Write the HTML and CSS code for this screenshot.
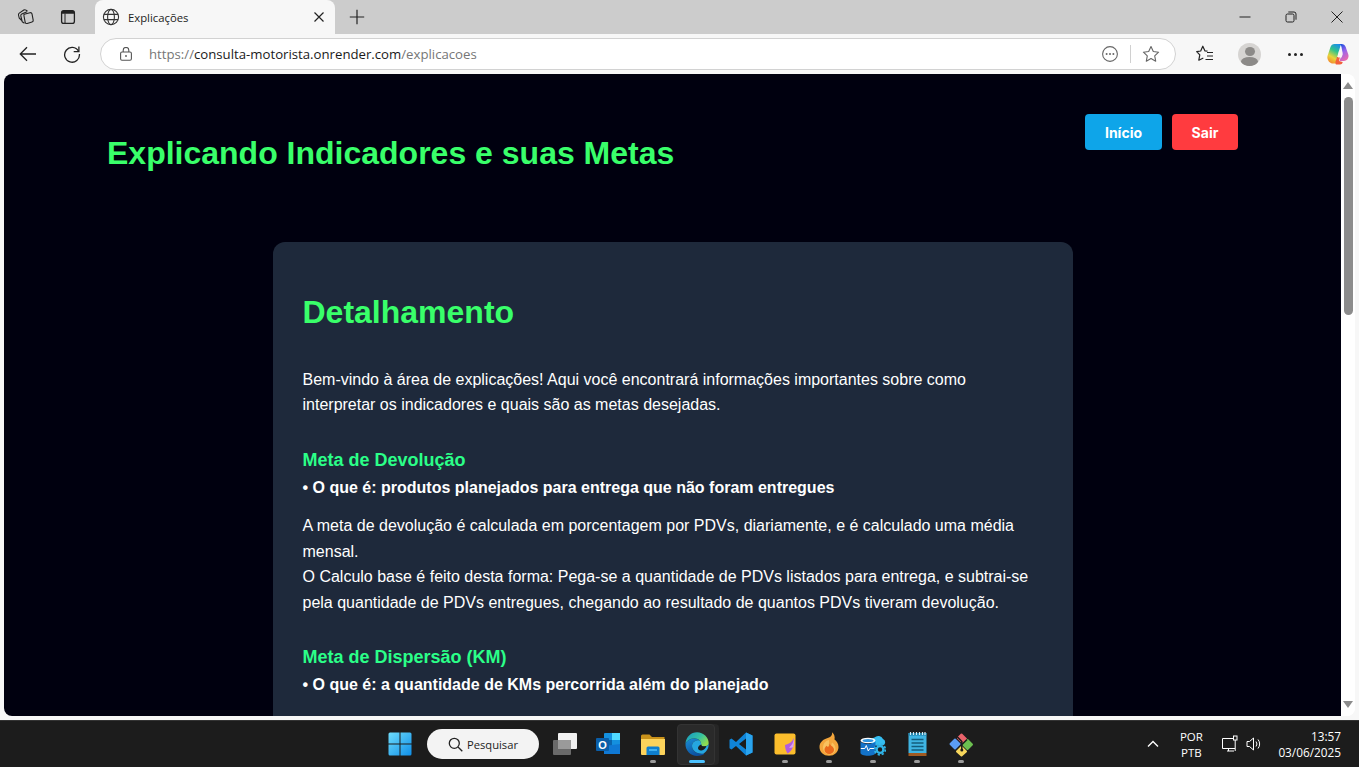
FILE: index.html
```html
<!DOCTYPE html>
<html lang="pt-BR">
<head>
  <meta charset="UTF-8" />
  <title>Explicações</title>
  <link rel="stylesheet" href="styles.css">
</head>
<body>
  <div class="window">

    <!-- Abas -->
    <div class="tabstrip">
      <div class="strip-left">
        <svg class="ico" width="18" height="18" viewBox="0 0 18 18" fill="none" stroke="#222" stroke-width="1.100" stroke-linejoin="round"><path d="M7.200 6.300 13 4.700q1.600-.3 2 1.200l1.200 6.300q.2 1.500-1.200 1.800l-4.800 1.500q-1.600.3-2-1.200L7 8q-.3-1.300.2-1.700z"/><path d="M7.500 15.200 5.200 13.700 3.800 7.800q-.2-1.300 1-1.800L10 3.700"/><path d="M4.800 12.500 2.200 10 1.500 7q-.2-1.200.8-1.900L6.800 2q1.100-.6 2.200.1L10.500 3.300"/></svg>
        <svg class="ico" width="18" height="18" viewBox="0 0 18 18"><rect x="2.600" y="2.600" width="12.800" height="12.800" rx="2.200" fill="none" stroke="#222" stroke-width="1.300"/><path d="M2.600 5.800h12.800v-1a2.200 2.200 0 0 0-2.200-2.200H4.800a2.200 2.200 0 0 0-2.200 2.200z" fill="#222"/><path d="M6 5.500v9.900" stroke="#222" stroke-width="1"/></svg>
      </div>
      <div class="tab">
        <svg width="18" height="18" viewBox="0 0 18 18" fill="none" stroke="#333" stroke-width="1.100"><circle cx="9" cy="9" r="7.600"/><ellipse cx="9" cy="9" rx="3.400" ry="7.600"/><path d="M2 6.400h14M2 11.600h14"/></svg>
        <span class="tab-title">Explicações</span>
        <svg class="tab-close" width="12" height="12" viewBox="0 0 12 12"><path d="M1.500 1.500l9 9M10.500 1.500l-9 9" stroke="#222" stroke-width="1.200"/></svg>
      </div>
      <svg class="new-tab" width="16" height="16" viewBox="0 0 16 16"><path d="M8 .8v14.400M.8 8h14.400" stroke="#222" stroke-width="1.200"/></svg>
      <div class="win-controls">
        <svg width="12" height="12" viewBox="0 0 12 12"><path d="M.5 6h11" stroke="#222" stroke-width="1"/></svg>
        <svg width="12" height="12" viewBox="0 0 12 12" fill="none" stroke="#222" stroke-width="1"><rect x="1" y="3" width="8" height="8" rx="1.500"/><path d="M3.300 1h5.700a2 2 0 0 1 2 2v5.700"/></svg>
        <svg width="12" height="12" viewBox="0 0 12 12"><path d="M.5.500l11 11M11.500.500l-11 11" stroke="#222" stroke-width="1"/></svg>
      </div>
    </div>

    <!-- Barra de endereço -->
    <div class="toolbar">
      <svg class="tool-back" width="18" height="18" viewBox="0 0 18 18" fill="none" stroke="#222" stroke-width="1.300"><path d="M17 9H1.500M8 2.200 1.300 9 8 15.800"/></svg>
      <svg class="tool-reload" width="18" height="18" viewBox="0 0 18 18" fill="none" stroke="#222" stroke-width="1.300"><path d="M15.500 6.200A7.400 7.400 0 1 0 16.400 9"/><path d="M15.900 1.400v5.200h-5.200"/></svg>
      <div class="omnibox">
        <svg width="14" height="14" viewBox="0 0 14 14" fill="none" stroke="#555" stroke-width="1.100"><rect x="1.600" y="5" width="10.800" height="8.200" rx="1.400"/><path d="M4.200 5V3.200a2.800 2.800 0 0 1 5.600 0V5"/><circle cx="7" cy="9" r=".9" fill="#555" stroke="none"/></svg>
        <span class="url"><span class="url-dim">https://</span>consulta-motorista.onrender.com<span class="url-dim">/explicacoes</span></span>
        <svg class="omni-dots" width="18" height="18" viewBox="0 0 18 18"><circle cx="9" cy="9" r="7.400" fill="none" stroke="#666" stroke-width="1.100"/><circle cx="5.600" cy="9" r="1" fill="#666"/><circle cx="9" cy="9" r="1" fill="#666"/><circle cx="12.400" cy="9" r="1" fill="#666"/></svg>
        <span class="omni-sep"></span>
        <svg width="18" height="18" viewBox="0 0 18 18"><path d="M9 1.600l2.300 4.900 5.300.7-3.900 3.700 1 5.300L9 13.600l-4.700 2.600 1-5.300-3.900-3.700 5.300-.7z" fill="none" stroke="#666" stroke-width="1.100" stroke-linejoin="round"/></svg>
      </div>
      <svg class="tool-favs" width="18" height="18" viewBox="0 0 18 18" fill="none" stroke="#222" stroke-width="1.200" stroke-linejoin="round"><path d="M11.500 6.200 9 6 6.800 1.200 4.700 6 .7 6.600l3.100 3.300-1 5.300L7.300 13"/><path d="M11 7.500h6M11 11h6M9.500 14.500h7.500"/></svg>
      <div class="avatar"><span class="avatar-head"></span><span class="avatar-body"></span></div>
      <div class="tool-more"><span></span><span></span><span></span></div>
      <svg class="copilot" width="22" height="22" viewBox="0 0 22 22">
        <defs>
          <linearGradient id="cpa" x1=".7" y1="0" x2=".3" y2="1"><stop offset="0" stop-color="#1c8fe6"/><stop offset=".35" stop-color="#2fc48a"/><stop offset=".7" stop-color="#e8d53a"/><stop offset="1" stop-color="#f48a2c"/></linearGradient>
          <linearGradient id="cpb" x1=".3" y1="0" x2=".7" y2="1"><stop offset="0" stop-color="#1f4fe0"/><stop offset=".45" stop-color="#9b63ea"/><stop offset="1" stop-color="#f06aa8"/></linearGradient>
        </defs>
        <path d="M7.500 1h6.500L10 14.500 8.800 20.500H6c-3 0-5-2.500-5.500-5 -.3-1.500 0-2.500.5-4l2.500-7.500C4.200 2 5.500 1 7.500 1z" fill="url(#cpa)"/>
        <path d="M12 1h2.500c2 0 3.500 1 4.200 3l2.600 7.500c.9 3-1 6.500-4.300 6.500H12.500l3-8.500L14.500 4C14 2 13 1.300 12 1z" fill="url(#cpb)"/>
        <path d="M9 21.500h4c1.500 0 2.200-.7 2.700-2.200l-.2-.3L12 18l1-4H10l-1.500 4.500c-.3 1.500 0 2.500.5 3z" fill="#f2603c"/>
        <path d="M11.800 8.500h3l1 2.500-1.200 3.500h-3.600z" fill="#fbf4f4"/>
      </svg>
    </div>

    <!-- Área da página -->
    <div class="viewport">
      <div class="page">
        <header class="page-header">
          <h1>Explicando Indicadores e suas Metas</h1>
          <nav class="page-nav">
            <a class="btn btn-home" href="#">Início</a>
            <a class="btn btn-exit" href="#">Sair</a>
          </nav>
        </header>

        <section class="card">
          <h2>Detalhamento</h2>
          <p class="intro">Bem-vindo à área de explicações! Aqui você encontrará informações importantes sobre como interpretar os indicadores e quais são as metas desejadas.</p>

          <h3>Meta de Devolução</h3>
          <p class="what">• O que é: produtos planejados para entrega que não foram entregues</p>
          <p>A meta de devolução é calculada em porcentagem por PDVs, diariamente, e é calculado uma média mensal.<br>O Calculo base é feito desta forma: Pega-se a quantidade de PDVs listados para entrega, e subtrai-se pela quantidade de PDVs entregues, chegando ao resultado de quantos PDVs tiveram devolução.</p>

          <h3>Meta de Dispersão (KM)</h3>
          <p class="what">• O que é: a quantidade de KMs percorrida além do planejado</p>
        </section>
      </div>
      <div class="scrollbar">
        <span class="arrow-up"></span>
        <div class="scroll-track"><span class="scroll-thumb"></span></div>
        <span class="arrow-down"></span>
      </div>
    </div>

    <!-- Barra de tarefas -->
    <div class="taskbar">
      <div class="task-btn">
        <svg width="24" height="24" viewBox="0 0 24 24">
          <defs><linearGradient id="win" x1="0" y1="0" x2="1" y2="1"><stop offset="0" stop-color="#6fdcfb"/><stop offset="1" stop-color="#0f8fe8"/></linearGradient></defs>
          <path d="M.5 2a1.500 1.500 0 0 1 1.500-1.500h9.500v11H.5zM12.500.5H22A1.500 1.500 0 0 1 23.500 2v9.500h-11zM.5 12.500h11v11H2A1.500 1.500 0 0 1 .5 22zM12.500 12.500h11V22a1.500 1.500 0 0 1-1.500 1.500h-9.500z" fill="url(#win)"/>
        </svg>
      </div>
      <div class="search">
        <svg width="15" height="15" viewBox="0 0 15 15" fill="none" stroke="#222" stroke-width="1.300"><circle cx="6.300" cy="6.300" r="5"/><path d="M10 10l4.300 4.300"/></svg>
        <span>Pesquisar</span>
      </div>
      <div class="task-btn">
        <svg width="26" height="24" viewBox="0 0 26 24"><rect x="1" y="8" width="18" height="15" rx="1" fill="#6a6a6a"/><rect x="6" y="1" width="19" height="16" rx="1" fill="#f0f0f0"/><rect x="6" y="8" width="13" height="9" fill="#9a9a9a"/></svg>
      </div>
      <div class="task-btn">
        <svg width="26" height="24" viewBox="0 0 26 24"><rect x="8" y="1" width="16" height="21" rx="1" fill="#1490df"/><rect x="16" y="1" width="8" height="7" fill="#50d9ff"/><rect x="8" y="8" width="8" height="7" fill="#0a64ad"/><path d="M8 14l16-2v10H8z" fill="#0f78d4"/><rect x="0" y="6" width="13" height="13" rx="1" fill="#0a5ea8"/><text class="outlook-o" x="6.500" y="16.500">O</text></svg>
      </div>
      <div class="task-btn has-dot">
        <svg width="26" height="24" viewBox="0 0 26 24"><path d="M1 4a1.500 1.500 0 0 1 1.500-1.500h7L12 5h12.500v3H1z" fill="#c9921a"/><path d="M1 7h24v15a1 1 0 0 1-1 1H2a1 1 0 0 1-1-1z" fill="#fcd35b"/><path d="M6.500 16a1.500 1.500 0 0 1 1.500-1.500h10a1.500 1.500 0 0 1 1.500 1.500v7h-13z" fill="#0e7fcf"/><rect x="9" y="17" width="8" height="2" fill="#3fb0f0"/></svg>
        <span class="dot"></span>
      </div>
      <div class="task-btn active">
        <svg width="24" height="24" viewBox="0 0 24 24">
          <defs>
            <linearGradient id="edgea" x1="0" y1="0" x2="1" y2=".6"><stop offset="0" stop-color="#1497c9"/><stop offset=".6" stop-color="#35c1a0"/><stop offset="1" stop-color="#8fdc50"/></linearGradient>
            <linearGradient id="edgeb" x1="0" y1="0" x2=".5" y2="1"><stop offset="0" stop-color="#1b8fd6"/><stop offset="1" stop-color="#0b4f9e"/></linearGradient>
          </defs>
          <path d="M.5 11.500C1 5 6 .3 12 .3c6.500 0 11.700 5 11.700 11 0 2-1.700 3-4 3-2.500 0-3.500-.5-3.500-1.800 0-2.700-2-6-6.500-6C5 6.500 2 8.500.5 11.500z" fill="url(#edgea)"/>
          <path d="M.5 11.500C2 8.500 5 6.500 9.700 6.500c2 0 3.700.8 4.800 2-3.500-.8-7.500 1.500-7.500 5.500 0 5 5 8.500 11 7.500 1 0 1.500.3 .8.8-2 1.200-4.300 1.700-6.800 1.700C6 24 0 18.500.5 11.500z" fill="url(#edgeb)"/>
          <path d="M7 14c0-4 4-6.300 7.500-5.500 1 1 1.700 2.500 1.700 4 0 1.300 1 1.800 3.500 1.800 2.300 0 4-1 4-3 .3 4-1.500 8-5 10.200-6 1-11.700-2.500-11.700-7.500z" fill="#25a6e0"/>
          <path d="M16.200 12.500c0 1.300 1 1.800 3.500 1.800l1.800-.3c-1 2.500-2.500 4-5 4.500-2 .3-3.500-.8-3.500-2.500 0-1.500 1.500-3 3.200-3.500z" fill="#1c1c1c"/>
        </svg>
        <span class="dot dot-active"></span>
      </div>
      <div class="task-btn">
        <svg width="24" height="24" viewBox="0 0 24 24"><path d="M17 .5 23.500 3.500v17L17 23.500 7 14l-4.500 3.500L.5 16.300V7.700L2.500 6.500 7 10zM17 6.500 10 12l7 5.500z" fill="#0f84d8" fill-rule="evenodd"/><path d="M17 .5 23.500 3.500v17L17 23.500z" fill="#2aa4ee"/></svg>
      </div>
      <div class="task-btn has-dot">
        <svg width="22" height="22" viewBox="0 0 22 22"><rect x=".5" y=".5" width="21" height="21" rx="2" fill="#fbbd2c"/><path d="M20 5C18 9 15 11 11 12c0 3 1 6 2.500 8.500C17 19 20 15 20 5z" fill="#b05ce0"/><path d="M20 5c-.5 4-2 7.500-5 9.500 2 .5 3.500.3 4.300-.5C20 11 20.200 8 20 5z" fill="#d8a0f2"/></svg>
        <span class="dot"></span>
      </div>
      <div class="task-btn has-dot">
        <svg width="20" height="24" viewBox="0 0 20 24"><path d="M13 .3c.6 2.700-1 4.500-3 5.200C4.500 7 .5 10 .5 15c0 5 4 8.800 9.500 8.800s9.500-3.800 9.500-8.800c0-3.500-2-6-4-7.500.6-2.500-.2-5.500-2.500-7.200z" fill="#f4a63c"/><path d="M10 8c-4 1-6 4-6 7.500 0 4 3 7 6.500 7s6-2.500 6-6c0-3-2-5-3.500-6-.5 1.500-.5 3-2 3.500-1 .3-1.500-.7-1-2.500z" fill="#f9c15f"/><path d="M10.500 11.500c.5 2 4.500 3 4.500 6.200 0 2.600-2.200 4.300-4.800 4.300S5.500 20.200 5.500 17.700c0-2 1.200-3 2-4 .6 1 1.300 1.200 2 .8.700-.8 1-1.800 1-3z" fill="#ea6a1c"/></svg>
        <span class="dot"></span>
      </div>
      <div class="task-btn has-dot">
        <svg width="26" height="24" viewBox="0 0 26 24"><path d="M11 8a4.200 4.200 0 0 1 3.500-2.500 5.200 5.200 0 0 1 8.500 1.500 3.500 3.500 0 0 1 0 6.500H12z" fill="#35bdf0"/><ellipse cx="8" cy="8.500" rx="7.500" ry="2.800" fill="#fff"/><ellipse cx="8" cy="8.500" rx="5.500" ry="1.600" fill="#2f95e0"/><path d="M.5 9v12c0 1.500 3.300 2.700 7.500 2.700s7.500-1.200 7.500-2.700V9c0 1.500-3.300 2.800-7.500 2.800S.5 10.500.5 9z" fill="#1372c8"/><path d="M.8 16.500h4l1.500-3 2 5.500 1.500-2.500h5" fill="none" stroke="#fff" stroke-width="1"/><circle cx="20" cy="17.500" r="3.400" fill="#1c1c1c" stroke="#30b4e8" stroke-width="2.400"/><circle cx="20" cy="17.500" r="5.300" fill="none" stroke="#30b4e8" stroke-width="1.800" stroke-dasharray="2.200 1.950"/></svg>
        <span class="dot"></span>
      </div>
      <div class="task-btn has-dot">
        <svg width="19" height="24" viewBox="0 0 19 24"><rect x=".5" y="1" width="18" height="20" fill="#3fb4e2"/><rect x=".5" y="21" width="18" height="3" fill="#a05a22"/><rect x=".5" y="1" width="18" height="2.500" fill="#1c7fa8"/><path d="M2.500 0v3M5.500 0v3M8.500 0v3M11.500 0v3M14.500 0v3M17 0v3" stroke="#d6eef8" stroke-width="1.200"/><path d="M3.500 7.500h12M3.500 11h12M3.500 14.500h12M3.500 18h12" stroke="#135c7c" stroke-width="1.500"/></svg>
        <span class="dot"></span>
      </div>
      <div class="task-btn has-dot">
        <svg width="25" height="25" viewBox="0 0 25 25" stroke-linejoin="round"><path d="M12.500 2.500 17 7l-3.500 3.500-4.500-4.500z" fill="#e9636b" stroke="#e9636b" stroke-width="2"/><path d="M6 7.500 10.500 12 6 16.500 1.500 12z" fill="#5b9cf2" stroke="#5b9cf2" stroke-width="2"/><path d="M18.500 8 23 12.500 18.500 17 14 12.500z" fill="#6cbf50" stroke="#6cbf50" stroke-width="2"/><path d="M12.500 15 17 19.500 12.500 23.500 8 19.500z" fill="#f7d65c" stroke="#f7d65c" stroke-width="2"/><path d="M8 4.500l4.800 5M12.800 9v9.500M13 12.500 18 7.500" fill="none" stroke="#1c1c1c" stroke-width="1.500"/><circle cx="12.800" cy="18" r="1.500" fill="#1c1c1c"/></svg>
        <span class="dot"></span>
      </div>

      <div class="tray">
        <svg class="tray-chevron" width="12" height="8" viewBox="0 0 12 8"><path d="M1 6.500 6 1.500l5 5" fill="none" stroke="#fff" stroke-width="1.400"/></svg>
        <div class="tray-lang"><span>POR</span><span>PTB</span></div>
        <svg width="18" height="18" viewBox="0 0 18 18" fill="none" stroke="#fff" stroke-width="1"><path d="M12 3.500H1.500v10h12.500M6 16h7M7.500 13.500V16"/><rect x="12.500" y="1" width="3.500" height="4" fill="#1c1c1c"/><path d="M14.200 5v11"/></svg>
        <svg width="16" height="16" viewBox="0 0 16 16" fill="none" stroke="#fff" stroke-width="1"><path d="M1 5.500h2.500L7.500 2v12L3.500 10.500H1z"/><path d="M10 5.500a4 4 0 0 1 0 5M12 3.500a7 7 0 0 1 0 9"/></svg>
        <div class="tray-clock"><span>13:57</span><span>03/06/2025</span></div>
      </div>
    </div>

  </div>
</body>
</html>
```

FILE: styles.css
```css
* {
  box-sizing: border-box;
  margin: 0;
  padding: 0;
}

html, body {
  height: 100%;
  overflow: hidden;
}

body {
  font-family: "Liberation Sans", Arial, sans-serif;
}

svg {
  display: block;
  flex-shrink: 0;
}

.window {
  display: flex;
  flex-direction: column;
  height: 767px;
  background: #f7f7f7;
}

/* Abas */
.tabstrip {
  display: flex;
  align-items: flex-end;
  height: 34px;
  background: #cccccc;
  flex-shrink: 0;
}

.strip-left {
  display: flex;
  align-items: center;
  gap: 24px;
  width: 95px;
  height: 34px;
  padding-left: 17px;
}

.tab {
  display: flex;
  align-items: center;
  width: 240px;
  height: 34px;
  padding: 0 10px 0 7px;
  background: #f7f7f7;
  border-radius: 8px 8px 0 0;
  font-family: "Open Sans", sans-serif;
  font-size: 11.3px;
  color: #222;
}

.tab-title {
  flex: 1;
  margin-left: 8px;
}

.new-tab {
  margin: 0 0 9px 14px;
}

.win-controls {
  display: flex;
  align-items: center;
  gap: 34px;
  height: 34px;
  margin-left: auto;
  padding-right: 16px;
}

/* Barra de endereço */
.toolbar {
  display: flex;
  align-items: center;
  height: 40px;
  flex-shrink: 0;
  background: #f7f7f7;
}

.tool-back {
  margin-left: 19px;
}

.tool-reload {
  margin-left: 26px;
}

.omnibox {
  display: flex;
  align-items: center;
  width: 1076px;
  height: 32px;
  margin-left: 19px;
  padding: 0 15px 0 18px;
  background: #fff;
  border: 1px solid #d2d2d2;
  border-radius: 16px;
}

.url {
  flex: 1;
  margin-left: 16px;
  font-family: "Open Sans", sans-serif;
  font-size: 13.2px;
  color: #1a1a1a;
  white-space: nowrap;
}

.url-dim {
  color: #767676;
}

.omni-sep {
  width: 1px;
  height: 18px;
  margin: 0 11px;
  background: #d0d0d0;
}

.tool-favs {
  margin-left: 20px;
}

.avatar {
  display: flex;
  flex-direction: column;
  align-items: center;
  width: 23px;
  height: 23px;
  margin-left: 24px;
  border-radius: 50%;
  background: #d6d4d2;
  overflow: hidden;
}

.avatar-head {
  width: 10px;
  height: 10px;
  margin-top: 4px;
  border-radius: 50%;
  background: #8c8a88;
}

.avatar-body {
  width: 17px;
  height: 10px;
  margin-top: 1px;
  border-radius: 50%;
  background: #8c8a88;
}

.tool-more {
  display: flex;
  gap: 3px;
  margin-left: 27px;
}

.tool-more span {
  width: 3px;
  height: 3px;
  border-radius: 50%;
  background: #222;
}

.copilot {
  margin-left: 24px;
}

/* Área da página */
.viewport {
  display: flex;
  height: 642px;
  margin: 0 4px;
  flex-shrink: 0;
  background: #fff;
  border-radius: 8px;
  overflow: hidden;
}

.page {
  flex: 1;
  height: 642px;
  padding: 0 103px;
  overflow: hidden;
  background: #00000f;
  color: #fff;
}

.page-header {
  display: flex;
  justify-content: space-between;
  align-items: flex-start;
  padding-top: 40px;
}

h1 {
  margin-top: 21px;
  font-size: 32px;
  line-height: 37px;
  color: #39ff6a;
}

.page-nav {
  display: flex;
  gap: 10px;
}

.btn {
  display: flex;
  justify-content: center;
  align-items: center;
  height: 36px;
  border-radius: 4px;
  font-family: Inter, sans-serif;
  font-size: 14px;
  font-weight: 700;
  color: #fff;
  text-decoration: none;
}

.btn-home {
  width: 77px;
  background: #0ea5e9;
}

.btn-exit {
  width: 66px;
  background: #ff3b3f;
}

.card {
  width: 800px;
  margin: 70px auto 0;
  padding: 30px;
  background: #1e293b;
  border-radius: 12px;
}

h2 {
  margin: 22px 0 35.6px;
  font-size: 32px;
  line-height: 37px;
  color: #39ff6a;
}

.card p {
  font-size: 16px;
  line-height: 25.6px;
}

.intro {
  margin-bottom: 32px;
}

h3 {
  font-size: 18px;
  line-height: 21px;
  color: #2bff88;
}

.card .what {
  margin: 4px 0 12.6px;
  font-weight: 700;
}

.what + p {
  margin-bottom: 31.4px;
}

/* Barra de rolagem */
.scrollbar {
  display: flex;
  flex-direction: column;
  align-items: center;
  width: 14px;
  background: #fff;
}

.arrow-up,
.arrow-down {
  width: 0;
  height: 0;
  border-left: 5px solid transparent;
  border-right: 5px solid transparent;
}

.arrow-up {
  margin-top: 8px;
  border-bottom: 7px solid #8c8c8c;
}

.arrow-down {
  margin-bottom: 8px;
  border-top: 7px solid #8c8c8c;
}

.scroll-track {
  flex: 1;
  width: 100%;
  padding: 8px 2px 0;
}

.scroll-thumb {
  display: block;
  width: 9px;
  height: 218px;
  margin: 0 auto;
  border-radius: 5px;
  background: #8c8c8c;
}

/* Barra de tarefas */
.taskbar {
  display: flex;
  align-items: center;
  height: 47px;
  margin-top: 4px;
  padding-left: 378px;
  flex-shrink: 0;
  background: #1c1c1c;
  border-top: 1px solid #333;
}

.task-btn {
  position: relative;
  display: flex;
  align-items: center;
  justify-content: center;
  width: 44px;
  height: 42px;
}

.task-btn svg {
  position: relative;
}

/* janela agrupada: dois retângulos sobrepostos */
.task-btn.active::before {
  content: "";
  position: absolute;
  left: 2px;
  top: 1px;
  width: 36px;
  height: 39px;
  background: #2a2a2a;
  border: 1px solid #333;
  border-radius: 4px;
  box-shadow: 4px 0 0 #262626;
}

.dot {
  position: absolute;
  left: 50%;
  bottom: 2px;
  width: 6px;
  height: 3px;
  margin-left: -3px;
  border-radius: 2px;
  background: #9a9a9a;
}

.dot-active {
  width: 16px;
  margin-left: -8px;
  background: #4cc2ff;
}

.outlook-o {
  font-family: "Liberation Sans", sans-serif;
  font-size: 11px;
  font-weight: 700;
  text-anchor: middle;
  fill: #fff;
}

.search {
  display: flex;
  align-items: center;
  gap: 4px;
  width: 112px;
  height: 30px;
  margin: 0 4px 0 5px;
  padding-left: 21px;
  border-radius: 15px;
  background: #f3f3f3;
  font-family: "Open Sans", sans-serif;
  font-size: 11.2px;
  color: #222;
}

.tray {
  display: flex;
  align-items: center;
  margin-left: auto;
  padding-right: 18px;
  font-family: "Open Sans", sans-serif;
  color: #fff;
}

.tray-chevron {
  margin-right: 20px;
}

.tray-lang {
  display: flex;
  flex-direction: column;
  align-items: center;
  width: 24px;
  margin-right: 18px;
  padding-top: 2px;
  line-height: 16px;
  font-size: 11.5px;
}

.tray-lang + svg {
  margin-right: 7px;
}

.tray-clock {
  display: flex;
  flex-direction: column;
  align-items: flex-end;
  margin-left: 16px;
  font-size: 11.8px;
  line-height: 16px;
}
```
